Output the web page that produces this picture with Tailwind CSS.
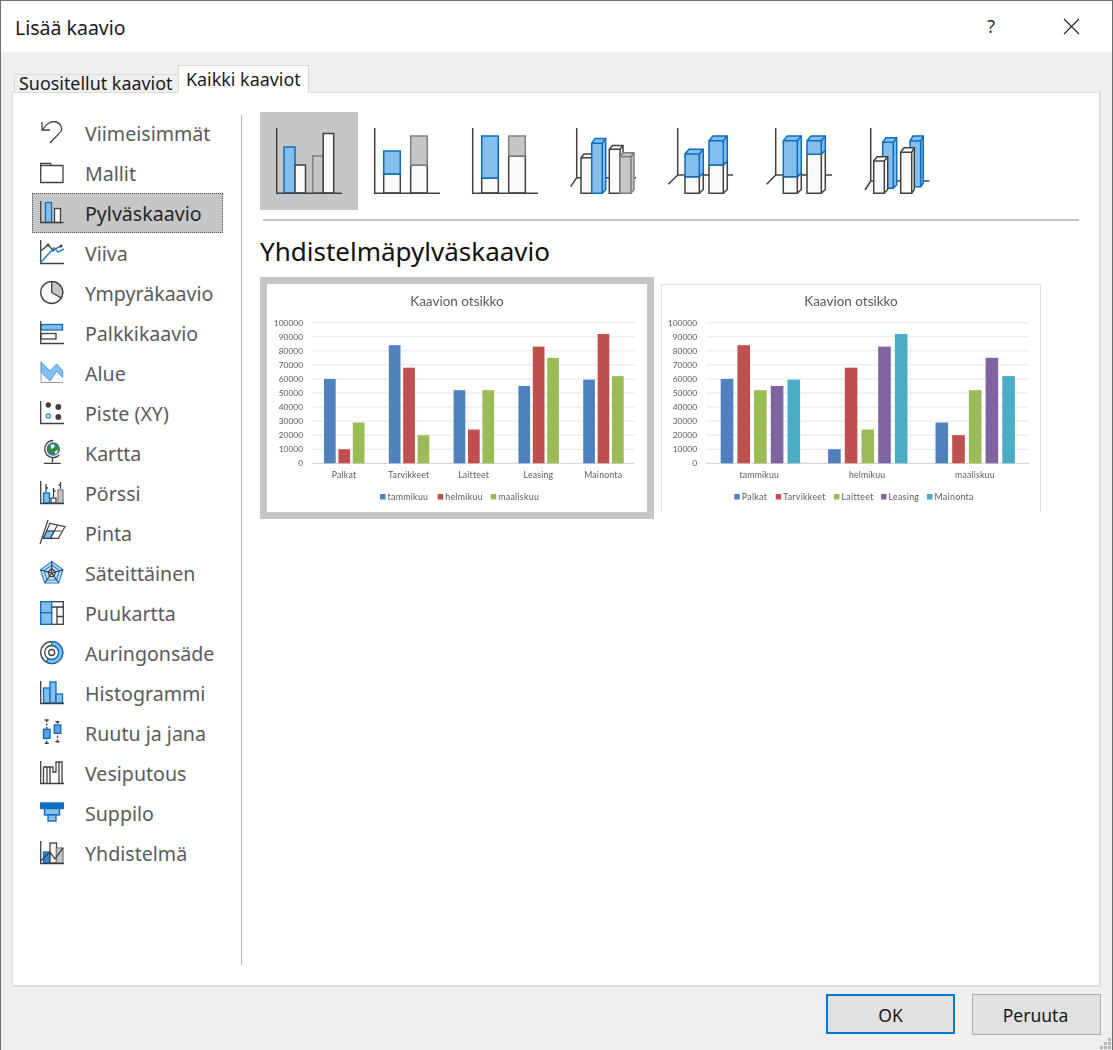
<!DOCTYPE html>
<html lang="fi">
  <head>
    <meta charset="UTF-8" />
    <title>Lisää kaavio</title>
    <script src="https://cdn.jsdelivr.net/npm/@tailwindcss/browser@4"></script>
  </head>
  <body class="bg-white">
    <div class="relative flex flex-col w-[1113px] h-[1050px] overflow-hidden border-l border-r border-t border-[#6e6e6e] bg-[#efefef] font-['Noto_Sans','Open_Sans',sans-serif] text-[#1a1a1a]">
      <!-- title bar -->
      <div class="flex items-center h-[51px] shrink-0 bg-white pl-[14px]">
        <span class="text-[19.5px] pt-[2px]">Lisää kaavio</span>
        <span class="ml-auto text-[18px] text-[#333]">?</span>
        <svg class="ml-[68px] mr-[32px]" width="17" height="17" viewBox="0 0 17 17" fill="none" stroke="#222" stroke-width="1.1"><path d="M1 1 16 16M16 1 1 16" /></svg>
      </div>

      <!-- tabs -->
      <div class="relative z-10 flex items-end h-[41px] shrink-0 pl-[13px] -mb-px">
        <div class="flex items-center h-[19px] w-[164px] border-l border-t border-[#d9d9d9] pl-[4px]">
          <span class="text-[17.9px] leading-none whitespace-nowrap -mt-[1px]">Suositellut kaaviot</span>
        </div>
        <div class="flex items-center h-[28px] w-[131px] border-l border-t border-r border-[#d9d9d9] border-b-white border-b bg-white pl-[7px] pt-[2px]">
          <span class="text-[17.9px] leading-none whitespace-nowrap">Kaikki kaaviot</span>
        </div>
      </div>

      <!-- panel -->
      <div class="flex w-[1089px] h-[895px] ml-[11px] border-l border-t border-r-2 border-b-2 border-[#dcdcdc] bg-white">
        <div class="w-[228px] shrink-0 pl-[19px] pr-[18px] pt-5 text-[19.6px] text-[#5b5b5b]">
          <div class="flex items-center h-10 border border-transparent pl-[7px]">
            <svg class="w-6 h-6 shrink-0" viewBox="0 0 24 24" fill="none" stroke="#404040" stroke-width="1.3"><path d="M2 1V9H10" /><path d="M2.5 8.5C7 3 9 0.5 14 .5C19 .5 22 5 21.5 9C21 12 14 17 10 22" /></svg>
            <span class="ml-[21px] pt-[2px]">Viimeisimmät</span>
          </div>
          <div class="flex items-center h-10 border border-transparent pl-[7px]">
            <svg class="w-6 h-6 shrink-0" viewBox="0 0 24 24" fill="none" stroke="#404040" stroke-width="1.3"><path d="M.7 21.5V2.5H10.5L11.5 4.5H23V21.5Z" /><path d="M.7 4.5H11.5" /></svg>
            <span class="ml-[21px] pt-[2px]">Mallit</span>
          </div>
          <div class="flex items-center h-10 border border-dotted border-[#555] bg-[#c6c6c6] pl-[7px] text-[#262626]">
            <svg class="w-6 h-6 shrink-0" viewBox="0 0 24 24" fill="none" stroke-width="1.3"><rect x="5.5" y="1.5" width="6" height="20" fill="#83beec" stroke="#0f6cbd" /><rect x="14.5" y="7.5" width="6" height="14" fill="#fafafa" stroke="#404040" /><path d="M.7 0V21.5H23.5" stroke="#404040" /></svg>
            <span class="ml-[21px] pt-[2px]">Pylväskaavio</span>
          </div>
          <div class="flex items-center h-10 border border-transparent pl-[7px]">
            <svg class="w-6 h-6 shrink-0 overflow-visible" viewBox="0 0 24 24" fill="none" stroke-width="1.3"><path d="M.7 -1V22.5H24" stroke="#404040" /><path d="M.7 10 8 4 13 9 21 5" stroke="#404040" /><circle cx="8" cy="4" r="1.5" fill="#404040" /><circle cx="13" cy="9" r="1.5" fill="#404040" /><circle cx="21" cy="5" r="1.5" fill="#404040" /><path d="M.7 21.5 14 7 18 11 24 8" stroke="#2b88d8" stroke-width="1.6" /></svg>
            <span class="ml-[21px] pt-[2px]">Viiva</span>
          </div>
          <div class="flex items-center h-10 border border-transparent pl-[7px]">
            <svg class="w-6 h-6 shrink-0" viewBox="0 0 24 24" fill="none" stroke="#404040" stroke-width="1.3"><circle cx="11.7" cy="11.5" r="11" fill="#fafafa" /><path d="M11.7 .5A11 11 0 0 1 21.2 17L11.7 11.5Z" fill="#c8c6c4" /></svg>
            <span class="ml-[21px] pt-[2px]">Ympyräkaavio</span>
          </div>
          <div class="flex items-center h-10 border border-transparent pl-[7px]">
            <svg class="w-6 h-6 shrink-0" viewBox="0 0 24 24" fill="none" stroke-width="1.3"><rect x="1" y="3.5" width="21.5" height="5.5" fill="#83beec" stroke="#0f6cbd" /><rect x="1" y="12.5" width="15" height="5.5" fill="#fafafa" stroke="#404040" /><path d="M.7 0V22.5H24" stroke="#404040" /></svg>
            <span class="ml-[21px] pt-[2px]">Palkkikaavio</span>
          </div>
          <div class="flex items-center h-10 border border-transparent pl-[7px]">
            <svg class="w-6 h-6 shrink-0" viewBox="0 0 24 24" fill="none" stroke-width="1"><path d="M1 .5V21.5H23" stroke="#9a9a9a" /><path d="M1.3 1 10 10 16.7 3 22.7 10V16.7L16.7 10 10 20 1.3 11.7Z" fill="#83beec" stroke="#4aa0e6" /></svg>
            <span class="ml-[21px] pt-[2px]">Alue</span>
          </div>
          <div class="flex items-center h-10 border border-transparent pl-[7px]">
            <svg class="w-6 h-6 shrink-0" viewBox="0 0 24 24" fill="none" stroke-width="1.3"><path d="M.7 0V22.5H24" stroke="#404040" /><circle cx="8.3" cy="4" r="2.7" fill="#404040" /><circle cx="18.3" cy="6" r="2.9" fill="#404040" /><circle cx="18.3" cy="16" r="2.9" fill="#404040" /><circle cx="8.3" cy="15" r="2" stroke="#2b88d8" /></svg>
            <span class="ml-[21px] pt-[2px]">Piste (XY)</span>
          </div>
          <div class="flex items-center h-10 border border-transparent pl-[7px]">
            <svg class="w-6 h-6 shrink-0 overflow-visible" viewBox="0 0 24 24" fill="none" stroke-width="1.3"><circle cx="13.3" cy="8" r="6" fill="#2e8b3d" stroke="#3a6ea5" /><path d="M10.5 3.5h4v2.5l-3 2.5ZM14.5 10.5l3 -2v3l-2 2Z" fill="#e8f0e8" /><path d="M13.3 -.5A8.5 8.5 0 1 0 19.3 14" stroke="#404040" /><path d="M12.5 16.5V21.5M4 22.3H20.7" stroke="#404040" /></svg>
            <span class="ml-[21px] pt-[2px]">Kartta</span>
          </div>
          <div class="flex items-center h-10 border border-transparent pl-[7px]">
            <svg class="w-6 h-6 shrink-0" viewBox="0 0 24 24" fill="none" stroke-width="1.3"><rect x="3.5" y="12" width="6" height="10" fill="#83beec" stroke="#0f6cbd" /><rect x="11" y="17" width="5" height="5" fill="#fafafa" stroke="#404040" /><rect x="18" y="9" width="5" height="13" fill="#c8c6c4" stroke="#7f7f7f" /><path d="M6 3V11M13.5 7V16M20.5 1V8M6 7H8M13.5 10H15.5M20.5 4H18.5" stroke="#404040" /><path d="M.7 0V22.5H24" stroke="#404040" /></svg>
            <span class="ml-[21px] pt-[2px]">Pörssi</span>
          </div>
          <div class="flex items-center h-10 border border-transparent pl-[7px]">
            <svg class="w-6 h-6 shrink-0 overflow-visible" viewBox="0 0 24 24" fill="none" stroke-width="1.2"><path d="M3.3 17.3 6.7 10H14L10.5 17.3Z" fill="#83beec" stroke="#2b88d8" /><path d="M10 2.3 25 5.7 18.3 17.3H3.3ZM6.7 10H21.5M17.5 4 10.5 17.3" stroke="#404040" /><path d="M8 -1 0 23" stroke="#404040" /></svg>
            <span class="ml-[21px] pt-[2px]">Pinta</span>
          </div>
          <div class="flex items-center h-10 border border-transparent pl-[7px]">
            <svg class="w-6 h-6 shrink-0" viewBox="0 0 24 24" fill="none" stroke-width="1.2"><path d="M11.7 .5 23 8.8 18.7 22H4.7L.5 8.8Z" fill="#c7e0f4" stroke="#2b88d8" /><path d="M11.7 4 19.5 9.8 16.5 19H7L4 9.8Z" stroke="#2b88d8" /><path d="M11.7 .5V12M23 8.8 11.7 12 18.7 22M4.7 22 11.7 12 .5 8.8M11.7 7.5 15.5 11 14 15.5H9.5L8 11Z" stroke="#404040" /></svg>
            <span class="ml-[21px] pt-[2px]">Säteittäinen</span>
          </div>
          <div class="flex items-center h-10 border border-transparent pl-[7px]">
            <svg class="w-6 h-6 shrink-0" viewBox="0 0 24 24" fill="none" stroke-width="1.3"><rect x=".7" y=".7" width="22.6" height="22.6" fill="#fafafa" stroke="#404040" /><path d="M11 6H23.3M17 6V23.3M17 15.5H23.3" stroke="#404040" /><rect x=".7" y=".7" width="11" height="11" fill="#83beec" stroke="#0f6cbd" /><rect x=".7" y="11.7" width="11" height="11.6" fill="#83beec" stroke="#0f6cbd" /></svg>
            <span class="ml-[21px] pt-[2px]">Puukartta</span>
          </div>
          <div class="flex items-center h-10 border border-transparent pl-[7px]">
            <svg class="w-6 h-6 shrink-0" viewBox="0 0 24 24" fill="none" stroke-width="1.3"><circle cx="11.7" cy="11.5" r="11" stroke="#404040" /><circle cx="11.7" cy="11.5" r="7" stroke="#404040" /><circle cx="11.7" cy="11.5" r="3" stroke="#404040" /><path d="M11.7 .5A11 11 0 1 1 6.2 21L8.2 17.6A7 7 0 1 0 11.7 4.5Z" fill="#83beec" stroke="#0f6cbd" /></svg>
            <span class="ml-[21px] pt-[2px]">Auringonsäde</span>
          </div>
          <div class="flex items-center h-10 border border-transparent pl-[7px]">
            <svg class="w-6 h-6 shrink-0" viewBox="0 0 24 24" fill="none" stroke-width="1.3"><rect x="3.5" y="7" width="6.5" height="15" fill="#83beec" stroke="#0f6cbd" /><rect x="10" y="1" width="6" height="21" fill="#83beec" stroke="#0f6cbd" /><rect x="16" y="13" width="6.5" height="9" fill="#83beec" stroke="#0f6cbd" /><path d="M.7 0V22.5H24" stroke="#404040" /></svg>
            <span class="ml-[21px] pt-[2px]">Histogrammi</span>
          </div>
          <div class="flex items-center h-10 border border-transparent pl-[7px]">
            <svg class="w-6 h-6 shrink-0 overflow-visible" viewBox="0 0 24 24" fill="none" stroke-width="1.4"><path d="M6.7 -1V22.3M17.5 .7V20.7" stroke="#404040" stroke-dasharray="2 1.5" /><path d="M4.7 -1H8.7M4.7 22.3H8.7M15.5 .7H19.5M15.5 20.7H19.5" stroke="#404040" /><rect x="3.5" y="8.3" width="6.5" height="9" fill="#5ba3e0" stroke="#0f6cbd" /><rect x="14.3" y="4" width="6.5" height="8.3" fill="#5ba3e0" stroke="#0f6cbd" /></svg>
            <span class="ml-[21px] pt-[2px]">Ruutu ja jana</span>
          </div>
          <div class="flex items-center h-10 border border-transparent pl-[7px]">
            <svg class="w-6 h-6 shrink-0" viewBox="0 0 24 24" fill="none" stroke="#404040" stroke-width="1.3"><path d="M.7 0V22.5H24" /><path d="M3.5 22V6H7V22M7 6H10V22M10 6H13V11H16V1H22V22M16 11V1M19 22V1" /></svg>
            <span class="ml-[21px] pt-[2px]">Vesiputous</span>
          </div>
          <div class="flex items-center h-10 border border-transparent pl-[7px]">
            <svg class="w-6 h-6 shrink-0" viewBox="0 0 24 24" fill="none" stroke="#0f6cbd" stroke-width="1.4"><rect x=".7" y="2" width="22.6" height="5.5" fill="#0f6cbd" /><rect x="4.5" y="7.5" width="15" height="6.5" fill="#83beec" /><rect x="8" y="14" width="8" height="6" fill="#83beec" /></svg>
            <span class="ml-[21px] pt-[2px]">Suppilo</span>
          </div>
          <div class="flex items-center h-10 border border-transparent pl-[7px]">
            <svg class="w-6 h-6 shrink-0" viewBox="0 0 24 24" fill="none" stroke-width="1.3"><rect x="3.5" y="11" width="6.5" height="11" fill="#2b88d8" stroke="#0f6cbd" /><rect x="10" y="2" width="6.5" height="20" fill="#fafafa" stroke="#404040" /><rect x="16.5" y="7" width="6.5" height="15" fill="#c8c6c4" stroke="#7f7f7f" /><path d="M.7 20 10 11 15 18 23 7" stroke="#404040" /><path d="M.7 0V22.5H24" stroke="#404040" /></svg>
            <span class="ml-[21px] pt-[2px]">Yhdistelmä</span>
          </div>
        </div>

        <div class="w-px h-[850px] mt-[22px] shrink-0 bg-[#b4b4b4]"></div>

        <div class="pl-[18px] pt-[19px]">
          <!-- chart subtypes -->
          <div class="flex">
            <div class="w-[98px] h-[98px] bg-[#c6c6c6]">
              <svg width="98" height="98" viewBox="0 0 98 98" fill="none" stroke-width="1.5">
                <rect x="24" y="35" width="11" height="46" fill="#83beec" stroke="#0f6cbd" />
                <rect x="35" y="53" width="10.5" height="28" fill="#fafafa" stroke="#404040" />
                <rect x="52.7" y="44" width="10.5" height="37" fill="#c8c6c4" stroke="#7f7f7f" />
                <rect x="63.2" y="21.5" width="10.5" height="59.5" fill="#fafafa" stroke="#404040" />
                <path d="M16.7 16V81.3H82" stroke="#404040" />
              </svg>
            </div>
            <div class="w-[98px] h-[98px]">
              <svg width="98" height="98" viewBox="0 0 98 98" fill="none" stroke-width="1.5">
                <rect x="25.7" y="62" width="16.6" height="19" fill="#fafafa" stroke="#404040" />
                <rect x="25.7" y="39" width="16.6" height="23" fill="#83beec" stroke="#0f6cbd" />
                <rect x="52.7" y="53" width="16.6" height="28" fill="#fafafa" stroke="#404040" />
                <rect x="52.7" y="24" width="16.6" height="29" fill="#c8c6c4" stroke="#7f7f7f" />
                <path d="M16.7 16V81.3H82" stroke="#404040" />
              </svg>
            </div>
            <div class="w-[98px] h-[98px]">
              <svg width="98" height="98" viewBox="0 0 98 98" fill="none" stroke-width="1.5">
                <rect x="25.7" y="66" width="16.6" height="15" fill="#fafafa" stroke="#404040" />
                <rect x="25.7" y="24" width="16.6" height="42" fill="#83beec" stroke="#0f6cbd" />
                <rect x="52.7" y="44" width="16.6" height="37" fill="#fafafa" stroke="#404040" />
                <rect x="52.7" y="24" width="16.6" height="20" fill="#c8c6c4" stroke="#7f7f7f" />
                <path d="M16.7 16V81.3H82" stroke="#404040" />
              </svg>
            </div>
            <div class="w-[98px] h-[98px]">
              <svg width="98" height="98" viewBox="0 0 98 98" fill="none" stroke-width="1.5">
                <path d="M22.7 16V65.7H82M22.7 65.7 16.7 74.7" stroke="#404040" />
                <path d="M27 45.7 30 42H41V81.3H27ZM27 45.7H38" fill="#fafafa" stroke="#404040" />
                <path d="M37.7 31.3 41 26.5H51.7V77.5L48.3 81.3H37.7Z" fill="#83beec" stroke="#0f6cbd" />
                <path d="M37.7 31.3H48.3V81.3M48.3 31.3 51.7 26.5" stroke="#0f6cbd" />
                <path d="M55.3 37.3 58.5 33.5H69V45H66V81.3H55.3Z" fill="#fafafa" stroke="#404040" />
                <path d="M55.3 37.3H66V45M66 37.3 69 33.5" stroke="#404040" />
                <path d="M66 44.7 69 40.7H80V77.5L77 81.3H66Z" fill="#c8c6c4" stroke="#7f7f7f" />
                <path d="M66 44.7H77V81.3M77 44.7 80 40.7" stroke="#7f7f7f" />
              </svg>
            </div>
            <div class="w-[98px] h-[98px]">
              <svg width="98" height="98" viewBox="0 0 98 98" fill="none" stroke-width="1.5">
                <path d="M25.7 16V63H81M25.7 63 16.3 72.3" stroke="#404040" />
                <path d="M33 64.7H47.3V81.3H33ZM47.3 64.7 51.3 61V77.5L47.3 81.3" fill="#fafafa" stroke="#404040" />
                <path d="M33 42 37 37.3H51.3V61L47.3 64.7H33Z" fill="#83beec" stroke="#0f6cbd" />
                <path d="M33 42H47.3V64.7M47.3 42 51.3 37.3" stroke="#0f6cbd" />
                <path d="M57 53H71.3V81.3H57ZM71.3 53 75.3 49V77.5L71.3 81.3" fill="#fafafa" stroke="#404040" />
                <path d="M57 28.7 61 24H75.3V49L71.3 53H57Z" fill="#83beec" stroke="#0f6cbd" />
                <path d="M57 28.7H71.3V53M71.3 28.7 75.3 24" stroke="#0f6cbd" />
              </svg>
            </div>
            <div class="w-[98px] h-[98px]">
              <svg width="98" height="98" viewBox="0 0 98 98" fill="none" stroke-width="1.5">
                <path d="M25.7 16V63H82M25.7 63 16.7 72.3" stroke="#404040" />
                <path d="M33.3 64.7H47.3V81.3H33.3ZM47.3 64.7 51.3 61V77.5L47.3 81.3" fill="#fafafa" stroke="#404040" />
                <path d="M33.3 28.7 37.5 24H51.3V61L47.3 64.7H33.3Z" fill="#83beec" stroke="#0f6cbd" />
                <path d="M33.3 28.7H47.3V64.7M47.3 28.7 51.3 24" stroke="#0f6cbd" />
                <path d="M57 42.3H71.3V81.3H57ZM71.3 42.3 75.3 38V77.5L71.3 81.3" fill="#fafafa" stroke="#404040" />
                <path d="M57 28.7 61 24H75.3V38L71.3 42.3H57Z" fill="#83beec" stroke="#0f6cbd" />
                <path d="M57 28.7H71.3V42.3M71.3 28.7 75.3 24" stroke="#0f6cbd" />
              </svg>
            </div>
            <div class="w-[98px] h-[98px]">
              <svg width="98" height="98" viewBox="0 0 98 98" fill="none" stroke-width="1.5">
                <path d="M22.7 16V69H81.3M22.7 69 17 78" stroke="#404040" />
                <path d="M34.7 30.3 38 25.7H48.7V73L45.3 76.3H34.7Z" fill="#83beec" stroke="#0f6cbd" />
                <path d="M34.7 30.3H45.3V76.3M45.3 30.3 48.7 25.7" stroke="#0f6cbd" />
                <path d="M62 29 65 24H75.3V71L72.7 74.7H62Z" fill="#83beec" stroke="#0f6cbd" />
                <path d="M62 29H72.7V74.7M72.7 29 75.3 24" stroke="#0f6cbd" />
                <path d="M25.7 49 29 44.7H39.7V77.5L36.3 81.3H25.7Z" fill="#fafafa" stroke="#404040" />
                <path d="M25.7 49H36.3V81.3M36.3 49 39.7 44.7" stroke="#404040" />
                <path d="M52.7 40.3 56 35.7H66.3V77.5L63.7 81.3H52.7Z" fill="#fafafa" stroke="#404040" />
                <path d="M52.7 40.3H63.7V81.3M63.7 40.3 66.3 35.7" stroke="#404040" />
              </svg>
            </div>
          </div>

          <div class="ml-[3px] mt-[9px] w-[816px] h-[2px] bg-[#c4c4c4]"></div>
          <h2 class="text-[26px] leading-[34px] mt-[13px] text-[#111] whitespace-nowrap">Yhdistelmäpylväskaavio</h2>

          <!-- chart previews -->
          <div class="flex gap-[7px] mt-[9px]">
            <div class="w-[394px] h-[242px] border-[7px] border-[#c6c6c6] bg-white">
              <svg id="chart-a" class="blur-[0.4px]" width="380" height="228" viewBox="0 0 380 228"></svg>
            </div>
            <div class="w-[380px] h-[228px] mt-[7px] border-l border-t border-r border-[#dedede] bg-white">
              <svg id="chart-b" class="blur-[0.4px] -ml-px -mt-px" width="380" height="228" viewBox="0 0 380 228"></svg>
            </div>
          </div>
        </div>
      </div>

      <!-- footer -->
      <div class="flex justify-end gap-[17px] pt-[7px] pr-[11px] text-[17.5px]">
        <button class="w-[129px] h-[40px] pt-[2px] border-2 border-[#0078d7] bg-[#e1e1e1]">OK</button>
        <button class="w-[129px] h-[41px] pt-[2px] pr-[2px] border border-[#adadad] bg-[#e1e1e1]">Peruuta</button>
      </div>
      <svg class="absolute right-0 bottom-0" width="13" height="13" viewBox="0 0 13 13" fill="#b4b4b4">
        <rect x="9" y="1" width="3" height="3" /><rect x="5" y="5" width="3" height="3" /><rect x="9" y="5" width="3" height="3" /><rect x="1" y="9" width="3" height="3" /><rect x="5" y="9" width="3" height="3" /><rect x="9" y="9" width="3" height="3" />
      </svg>
    </div>

    <script>
      const colors = ["#4f81bd", "#c0504d", "#9bbb59", "#8064a2", "#4bacc6"];
      const months = ["tammikuu", "helmikuu", "maaliskuu"];
      const cats = ["Palkat", "Tarvikkeet", "Laitteet", "Leasing", "Mainonta"];
      const data = [
        [60, 84, 52, 55, 59.5],
        [10, 68, 24, 83, 92],
        [29, 20, 52, 75, 62],
      ];

      function txt(x, y, s, size, anchor, spacing = 0) {
        return `<text x="${x}" y="${y}" font-size="${size}" letter-spacing="${spacing}" text-anchor="${anchor}" fill="#595959" font-family="Lato, sans-serif">${s}</text>`;
      }

      function axes() {
        let out = txt(190, 22, "Kaavion otsikko", 13.5, "middle");
        for (let i = 0; i <= 10; i++) {
          const y = 179.3 - i * 14.06;
          out += `<rect x="45" y="${y - 0.5}" width="323" height="1" fill="${i ? "#e6e6e6" : "#cfcfcf"}"/>`;
          out += txt(36, y + 3, i * 10000, 8.4, "end");
        }
        return out;
      }

      // columns per group, drawn from values in thousands
      function bars(groups, start, step, gap, w) {
        let out = "";
        groups.forEach((g, i) => {
          g.forEach((v, j) => {
            const h = v * 1.406;
            out += `<rect x="${start + step * i + gap * j}" y="${179.3 - h}" width="${w}" height="${h}" fill="${colors[j]}"/>`;
          });
        });
        return out;
      }

      function legend(items) {
        return items
          .map(([x, s, c]) => `<rect x="${x}" y="210" width="5.5" height="5.5" fill="${c}"/>` + txt(x + 7.5, 215.5, s, 8.8, "start", 0.3))
          .join("");
      }

      const byCat = cats.map((_, i) => data.map((row) => row[i]));
      let a = axes() + bars(byCat, 57, 64.8, 14.4, 11.7);
      cats.forEach((c, i) => (a += txt(77 + 64.8 * i, 194, c, 8.7, "middle", 0.2)));
      a += legend([[113, months[0], colors[0]], [170.7, months[1], colors[1]], [223.7, months[2], colors[2]]]);
      document.getElementById("chart-a").innerHTML = a;

      let b = axes() + bars(data, 59.7, 107.4, 16.7, 12.6);
      months.forEach((m, i) => (b += txt(98.3 + 107.8 * i, 194, m, 8.7, "middle", 0.2)));
      b += legend([[73.3, cats[0], colors[0]], [114.7, cats[1], colors[1]], [173, cats[2], colors[2]], [220, cats[3], colors[3]], [266, cats[4], colors[4]]]);
      document.getElementById("chart-b").innerHTML = b;
    </script>
  </body>
</html>
